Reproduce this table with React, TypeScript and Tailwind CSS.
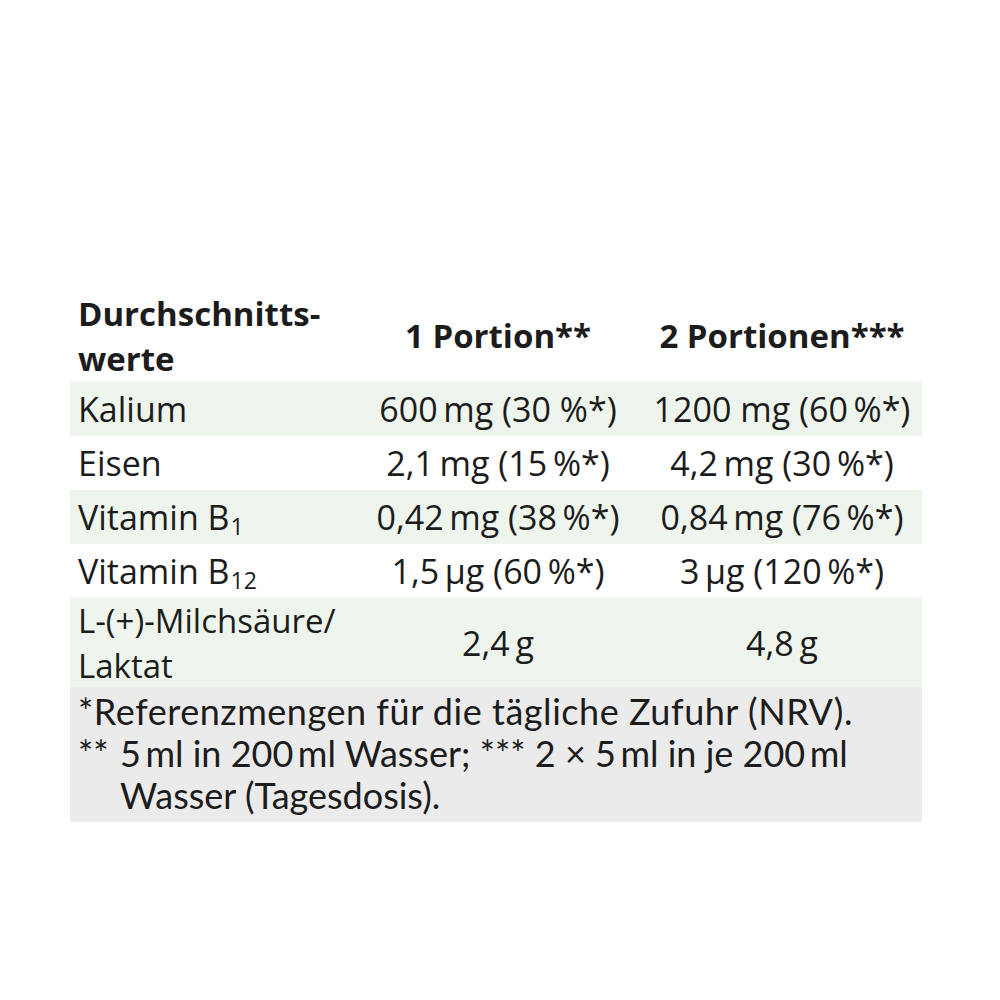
import React from 'react';

// thin space used between number and unit, like the print original
const t = '\u2009';

const rows = [
  { name: <>Kalium</>, one: `600${t}mg (30 %*)`, two: `1200 mg (60${t}%*)`, green: true },
  { name: <>Eisen</>, one: `2,1${t}mg (15${t}%*)`, two: `4,2${t}mg (30${t}%*)`, green: false },
  { name: <>Vitamin B<sub className="text-[0.68em] ml-[1px]">1</sub></>, one: `0,42${t}mg (38${t}%*)`, two: `0,84${t}mg (76${t}%*)`, green: true },
  { name: <>Vitamin B<sub className="text-[0.68em] ml-[1px]">12</sub></>, one: `1,5${t}µg (60${t}%*)`, two: `3${t}µg (120${t}%*)`, green: false },
];

const App = () => {
  return (
    <div className="w-[1000px] h-[1000px] bg-white pt-[290px] pl-[70px] text-[#1c1c1c] font-['Open_Sans',sans-serif]">
      <div className="w-[852px]">
        <div className="grid grid-cols-[284px_288px_280px] h-[92px] items-center">
          <div className="pl-2 text-[33px] font-bold leading-[45px]">
            Durchschnitts-
            <br />
            werte
          </div>
          <div className="text-center text-[33px] font-bold">1 Portion**</div>
          <div className="text-center text-[33px] font-bold">2 Portionen***</div>
        </div>
        {rows.map((r, i) => (
          <div
            key={i}
            className={`grid grid-cols-[284px_288px_280px] h-[54px] items-center text-[34px] ${r.green ? 'bg-[#eef5ec]' : 'bg-white'}`}
          >
            <div className="pl-2 whitespace-nowrap">{r.name}</div>
            <div className="text-center whitespace-nowrap">{r.one}</div>
            <div className="text-center whitespace-nowrap">{r.two}</div>
          </div>
        ))}
        <div className="grid grid-cols-[284px_288px_280px] h-[89px] items-center text-[34px] bg-[#eef5ec]">
          <div className="pl-2 text-[33px] leading-[45px] whitespace-nowrap">
            L-(+)-Milchsäure/
            <br />
            Laktat
          </div>
          <div className="text-center">2,4{t}g</div>
          <div className="text-center">4,8{t}g</div>
        </div>
        <div className="bg-[#ebebeb] h-[135px] pl-2 pt-[3px] font-['Lato',sans-serif] text-[36px] leading-[42px] whitespace-nowrap">
          <div className="tracking-[0.015em]">*Referenzmengen für die tägliche Zufuhr (NRV).</div>
          <div className="flex">
            <span className="w-[42px] shrink-0">**</span>
            <span>
              5{t}ml in 200{t}ml Wasser; *** 2 × 5{t}ml in je 200{t}ml
              <br />
              Wasser (Tagesdosis).
            </span>
          </div>
        </div>
      </div>
    </div>
  );
};

export default App;
